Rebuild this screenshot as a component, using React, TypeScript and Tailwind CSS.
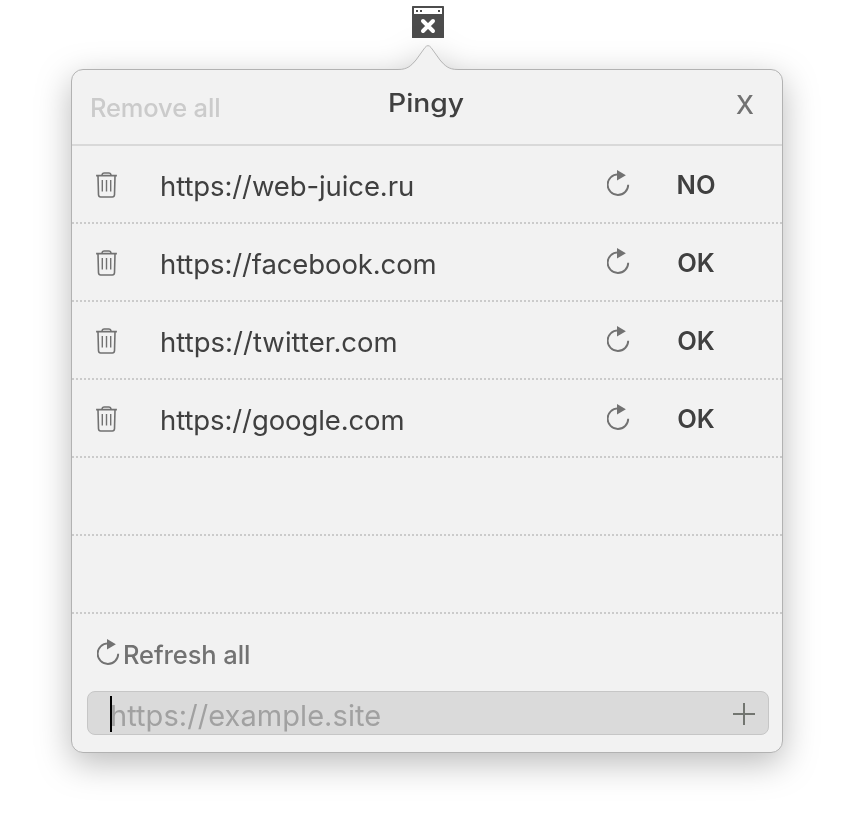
const sites = [
  { url: 'https://web-juice.ru', status: 'NO', tracking: 'tracking-[-0.1px]' },
  { url: 'https://facebook.com', status: 'OK', tracking: 'tracking-[-0.11px]' },
  { url: 'https://twitter.com', status: 'OK', tracking: 'tracking-[0.03px]' },
  { url: 'https://google.com', status: 'OK', tracking: 'tracking-[-0.1px]' },
];

function TrayIcon() {
  return (
    <svg className="block h-8 w-8" viewBox="0 0 32 32">
      <rect width="32" height="32" rx="0.6" fill="#4c4c4c" />
      <path d="M2 2h28v6H2z" fill="#fff" />
      <path d="M4 4h2v2H4zM8 4h2v2H8zM26 4h2v2h-2z" fill="#4c4c4c" />
      <path d="M11 15l10 10M21 15L11 25" stroke="#fff" strokeWidth="4" strokeLinecap="round" />
    </svg>
  );
}

function TrashIcon() {
  return (
    <svg className="block h-[26px] w-[22px]" viewBox="0 0 22 26" fill="none" stroke="#727272">
      <path d="M0.100 3.700H20.900" strokeWidth="1.7" />
      <path d="M6 3.2C6.100 1.500 6.900 1 8.300 1h4.400c1.400 0 2.200 0.500 2.300 2.200" strokeWidth="1.5" />
      <path d="M2 4l0.500 18.800c0.100 1.500 0.900 2.200 2.100 2.200h11.800c1.200 0 2-0.700 2.100-2.200L19 4" strokeWidth="1.6" />
      <path d="M6.300 8v11.500M10.500 8v11.500M14.700 8v11.500" strokeWidth="1.400" />
    </svg>
  );
}

function RefreshIcon() {
  return (
    <svg className="block h-[26px] w-[23px]" viewBox="0 0 23 26">
      <path d="M11 4.4A10.3 10.3 0 1 0 21.2 14.7" fill="none" stroke="#727272" strokeWidth="1.9" />
      <path d="M10 0L18.9 5.3L10 10.6z" fill="#727272" />
    </svg>
  );
}

export default function App() {
  return (
    <div className="flex h-[832px] w-[854px] flex-col overflow-hidden bg-white pt-1.5 font-['Inter',sans-serif] text-[#404040]">
      <div className="ml-[412px]">
        <TrayIcon />
      </div>
      <div className="mt-1.5 ml-[71px] flex w-[712px] flex-col drop-shadow-[0_10px_17px_rgba(0,0,0,0.27)]">
        <svg className="relative z-10 -mb-px ml-[327px] block h-[26px] w-[60px]" viewBox="0 0 60 26">
          <path d="M0 26V25.5C10 25.5 13 22.5 18 17L27.2 4.2Q30 -0.2 32.8 4.2L42 17C47 22.5 50 25.5 60 25.5V26z" fill="#f2f2f2" />
          <path d="M0 25.5C10 25.5 13 21.500 18 16L27 3.500Q30 -0.2 33 3.500L42 16C47 21.500 50 25.500 60 25.500" fill="none" stroke="#b5b5b5" />
        </svg>
        <div className="flex h-[684px] flex-col overflow-hidden rounded-[12px] border border-[#b2b2b2] bg-[#f2f2f2]">
          <header className="flex h-[76px] shrink-0 border-b-2 border-[#d9d9d9] pl-[18px]">
            <button className="mt-5 h-9 w-[298px] text-left text-[25.500px] leading-9 font-medium tracking-[-0.15px] whitespace-nowrap text-[#cbcbcb]">Remove all</button>
            <h1 className="mt-[15px] h-9 w-[349px] origin-left scale-x-[1.11] text-[25.500px] leading-9 font-medium">Pingy</h1>
            <button className="mt-[17px] -ml-px h-9 text-[25.500px] leading-9 font-medium text-[#727272]">X</button>
          </header>
          <ul>
            {sites.map((site) => (
              <li key={site.url} className="flex h-[78px] border-b-2 border-dotted border-[#cbcbcb] pl-6">
                <button className="mt-[26px] h-[26px] w-[22px]"><TrashIcon /></button>
                <span className={`mt-5 ml-[42px] w-[447px] text-[27.500px] leading-10 ${site.tracking}`}>{site.url}</span>
                <button className="mt-6 h-[26px] w-[23px]"><RefreshIcon /></button>
                <span className="mt-[19px] w-[132px] text-center text-[25.500px] leading-10 font-semibold">{site.status}</span>
              </li>
            ))}
            <li className="h-[78px] border-b-2 border-dotted border-[#cbcbcb]" />
            <li className="h-[78px] border-b-2 border-dotted border-[#cbcbcb]" />
          </ul>
          <button className="mt-[25px] ml-[25px] flex h-9 items-start text-[25.500px] leading-8 font-medium tracking-[-0.1px] text-[#727272]">
            <RefreshIcon />
            <span className="ml-[3px]">Refresh all</span>
          </button>
          <div className="mt-4 ml-[15px] flex h-11 w-[682px] items-start rounded-[8px] border border-[#c6c6c6] bg-[#dadada] pl-[22px]">
            <span className="mt-1 h-9 w-0.5 bg-black" />
            <span className="mt-1 -ml-0.5 w-[623px] text-[29px] leading-10 tracking-[0.06px] text-[#a1a1a1]">https://example.site</span>
            <svg className="mt-[11px] block h-[22px] w-[22px]" viewBox="0 0 22 22">
              <path d="M0 11H22M11 0V22" stroke="#727570" strokeWidth="2" />
            </svg>
          </div>
        </div>
      </div>
    </div>
  );
}
